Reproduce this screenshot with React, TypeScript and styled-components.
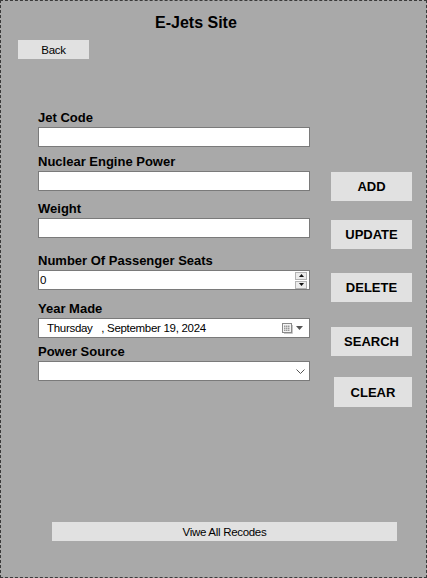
import React from 'react';
import styled, { createGlobalStyle } from 'styled-components';

const GlobalStyle = createGlobalStyle`
  html, body {
    margin: 0;
    padding: 0;
    background: #a9a9a9;
  }
`;

const Frame = styled.div`
  width: 427px;
  height: 578px;
  box-sizing: border-box;
  border: 1px dashed #3a3a3a;
  background: #a9a9a9;
  display: flex;
  flex-direction: column;
  font-family: 'Liberation Sans', Arial, sans-serif;
  color: #000;
`;

const Title = styled.h1`
  margin: 13px 0 0 154px;
  font-size: 16px;
  line-height: 18px;
  font-weight: bold;
`;

const FlatButton = styled.button<{ $width: number; $height: number }>`
  width: ${(p) => p.$width}px;
  height: ${(p) => p.$height}px;
  box-sizing: border-box;
  border: 1px solid #e1e1e1;
  background: #e1e1e1;
  padding: 0;
  font-family: 'Liberation Sans', Arial, sans-serif;
  font-size: 11.5px;
  letter-spacing: -0.3px;
  color: #000;
`;

const BackButton = styled(FlatButton)`
  margin: 8px 0 0 17px;
`;

const Body = styled.div`
  display: flex;
  margin: 51px 0 0 37px;
`;

const FormColumn = styled.div`
  width: 272px;
  display: flex;
  flex-direction: column;
`;

const Field = styled.div<{ $top: number }>`
  display: flex;
  flex-direction: column;
  margin-top: ${(p) => p.$top}px;
`;

const Label = styled.label`
  font-size: 13px;
  line-height: 15px;
  font-weight: bold;
`;

const Box = styled.div`
  margin-top: 2px;
  height: 20px;
  box-sizing: border-box;
  border: 1px solid #7a7a7a;
  background: #fff;
  display: flex;
  align-items: center;
  font-size: 11.5px;
  letter-spacing: -0.3px;
`;

const BoxText = styled.span<{ $indent: number }>`
  flex: 1;
  padding-left: ${(p) => p.$indent}px;
  white-space: pre;
`;

const Spinner = styled.div`
  width: 12px;
  height: 17px;
  margin-right: 2px;
  display: flex;
  flex-direction: column;
  gap: 1px;
`;

const SpinHalf = styled.div`
  flex: 1;
  box-sizing: border-box;
  border: 1px solid #b4b4b4;
  background: #ececec;
  display: flex;
  align-items: center;
  justify-content: center;
`;

const IconSlot = styled.div<{ $right: number }>`
  display: flex;
  align-items: center;
  gap: 3px;
  margin-right: ${(p) => p.$right}px;
`;

const ButtonColumn = styled.div`
  width: 81px;
  margin-left: 21px;
  padding-top: 62px;
  display: flex;
  flex-direction: column;
  align-items: flex-end;
`;

const ActionButton = styled(FlatButton)<{ $top: number }>`
  margin-top: ${(p) => p.$top}px;
  font-size: 13px;
  font-weight: bold;
  letter-spacing: 0;
`;

const FooterButton = styled(FlatButton)`
  margin: 115px 0 0 51px;
`;

const Arrow = ({ up }: { up?: boolean }) => (
  <svg width="5" height="3" viewBox="0 0 5 3">
    <polygon points={up ? '2.5,0 5,3 0,3' : '0,0 5,0 2.5,3'} fill="#111" />
  </svg>
);

const CalendarIcon = () => (
  <svg width="11" height="11" viewBox="0 0 11 11">
    <rect x="0.5" y="0.5" width="9" height="9" fill="#f4f4f4" stroke="#8a8a8a" />
    {[2, 4, 6].map((y) =>
      [2, 4, 6].map((x) => <rect key={`${x}-${y}`} x={x} y={y + 0.5} width="1.5" height="1.5" fill="#9a9a9a" />)
    )}
    <path d="M10.5 2 V10.5 H2" stroke="#c8c8c8" fill="none" />
  </svg>
);

const Chevron = () => (
  <svg width="9" height="5" viewBox="0 0 9 5">
    <polyline points="0.5,0.5 4.5,4.5 8.5,0.5" fill="none" stroke="#555" strokeWidth="1" />
  </svg>
);

const App: React.FC = () => {
  return (
    <>
      <GlobalStyle />
      <Frame>
        <Title>E-Jets Site</Title>
        <BackButton $width={71} $height={19}>
          Back
        </BackButton>

        <Body>
          <FormColumn>
            <Field $top={0}>
              <Label>Jet Code</Label>
              <Box />
            </Field>
            <Field $top={7}>
              <Label>Nuclear Engine Power</Label>
              <Box />
            </Field>
            <Field $top={10}>
              <Label>Weight</Label>
              <Box />
            </Field>
            <Field $top={15}>
              <Label>Number Of Passenger Seats</Label>
              <Box>
                <BoxText $indent={1}>0</BoxText>
                <Spinner>
                  <SpinHalf>
                    <Arrow up />
                  </SpinHalf>
                  <SpinHalf>
                    <Arrow />
                  </SpinHalf>
                </Spinner>
              </Box>
            </Field>
            <Field $top={11}>
              <Label>Year Made</Label>
              <Box>
                <BoxText $indent={8}>{'Thursday   , September 19, 2024'}</BoxText>
                <IconSlot $right={6}>
                  <CalendarIcon />
                  <svg width="7" height="4" viewBox="0 0 7 4">
                    <polygon points="0,0 7,0 3.5,4" fill="#555" />
                  </svg>
                </IconSlot>
              </Box>
            </Field>
            <Field $top={6}>
              <Label>Power Source</Label>
              <Box>
                <BoxText $indent={2} />
                <IconSlot $right={4}>
                  <Chevron />
                </IconSlot>
              </Box>
            </Field>
          </FormColumn>

          <ButtonColumn>
            <ActionButton $top={0} $width={81} $height={29}>
              ADD
            </ActionButton>
            <ActionButton $top={19} $width={81} $height={29}>
              UPDATE
            </ActionButton>
            <ActionButton $top={24} $width={81} $height={29}>
              DELETE
            </ActionButton>
            <ActionButton $top={25} $width={81} $height={29}>
              SEARCH
            </ActionButton>
            <ActionButton $top={21} $width={78} $height={30}>
              CLEAR
            </ActionButton>
          </ButtonColumn>
        </Body>

        <FooterButton $width={345} $height={19}>
          Viwe All Recodes
        </FooterButton>
      </Frame>
    </>
  );
};

export default App;
